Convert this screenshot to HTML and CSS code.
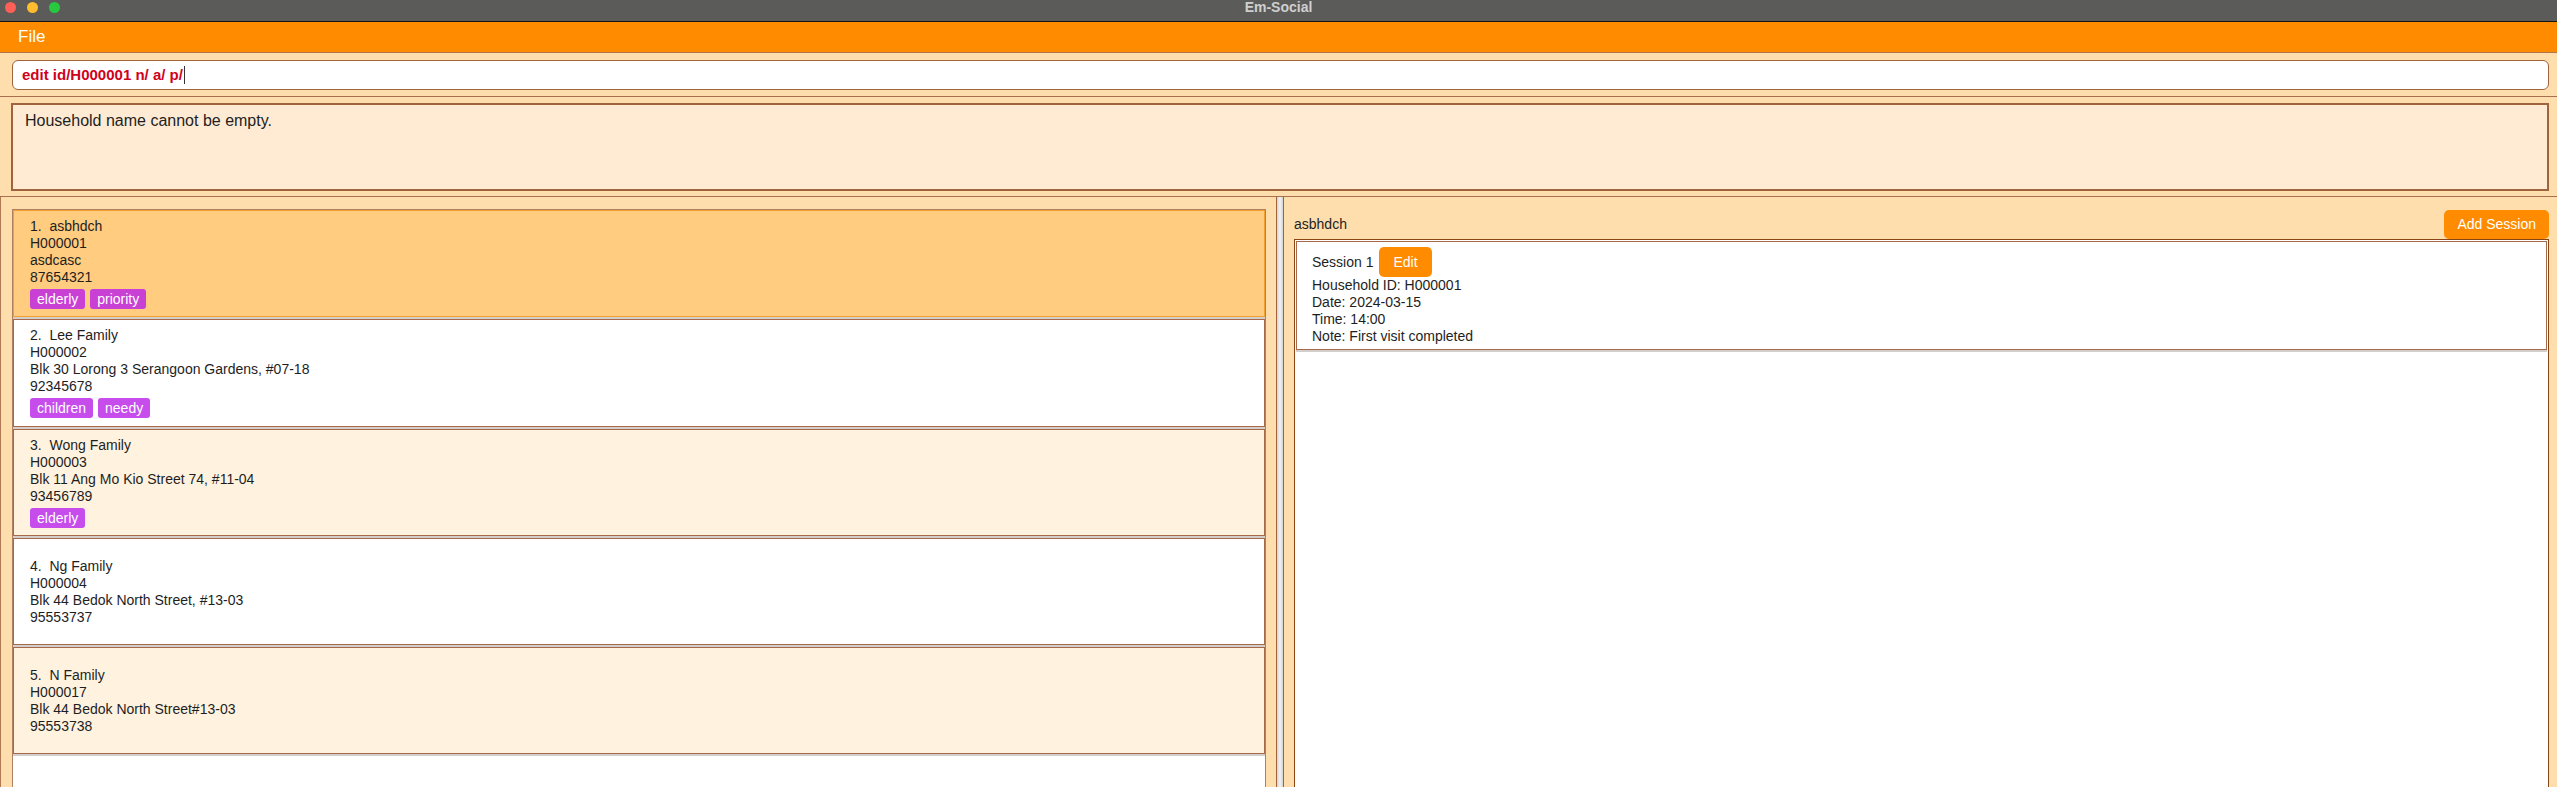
FILE: index.html
```html
<!DOCTYPE html>
<html lang="en">
<head>
<meta charset="utf-8">
<title>Em-Social</title>
<link rel="stylesheet" href="styles.css">
</head>
<body>
<div class="window">
  <div class="titlebar">
    <div class="lights">
      <span class="light red"></span>
      <span class="light yellow"></span>
      <span class="light green"></span>
    </div>
    <div class="title">Em-Social</div>
    <div></div>
  </div>
  <div class="menubar"><span class="menu-item">File</span></div>
  <div class="command">
    <div class="command-input">edit id/H000001 n/ a/ p/<span class="caret"></span></div>
  </div>
  <div class="result">
    <div class="result-box">Household name cannot be empty.</div>
  </div>
  <div class="main">
    <div class="left">
      <div class="list">
        <div class="cell">
          <div class="card selected">
            <div>1.&nbsp;&nbsp;asbhdch</div>
            <div>H000001</div>
            <div>asdcasc</div>
            <div>87654321</div>
            <div class="tags"><span class="tag">elderly</span><span class="tag">priority</span></div>
          </div>
        </div>
        <div class="cell">
          <div class="card">
            <div>2.&nbsp;&nbsp;Lee Family</div>
            <div>H000002</div>
            <div>Blk 30 Lorong 3 Serangoon Gardens, #07-18</div>
            <div>92345678</div>
            <div class="tags"><span class="tag">children</span><span class="tag">needy</span></div>
          </div>
        </div>
        <div class="cell">
          <div class="card alt">
            <div>3.&nbsp;&nbsp;Wong Family</div>
            <div>H000003</div>
            <div>Blk 11 Ang Mo Kio Street 74, #11-04</div>
            <div>93456789</div>
            <div class="tags"><span class="tag">elderly</span></div>
          </div>
        </div>
        <div class="cell">
          <div class="card">
            <div>4.&nbsp;&nbsp;Ng Family</div>
            <div>H000004</div>
            <div>Blk 44 Bedok North Street, #13-03</div>
            <div>95553737</div>
          </div>
        </div>
        <div class="cell">
          <div class="card alt">
            <div>5.&nbsp;&nbsp;N Family</div>
            <div>H000017</div>
            <div>Blk 44 Bedok North Street#13-03</div>
            <div>95553738</div>
          </div>
        </div>
      </div>
    </div>
    <div class="splitter"></div>
    <div class="right">
      <div class="right-head">
        <span class="household-name">asbhdch</span>
        <span class="btn">Add Session</span>
      </div>
      <div class="sessions">
        <div class="session-cell">
          <div class="session">
            <div class="session-top"><span>Session 1</span><span class="btn edit">Edit</span></div>
            <div>Household ID: H000001</div>
            <div>Date: 2024-03-15</div>
            <div>Time: 14:00</div>
            <div>Note: First visit completed</div>
          </div>
        </div>
      </div>
    </div>
  </div>
</div>
</body>
</html>
```

FILE: styles.css
```css
* { box-sizing: border-box; }
html, body {
  margin: 0;
  padding: 0;
  width: 2557px;
  height: 787px;
  overflow: hidden;
  font-family: "Liberation Sans", Arial, sans-serif;
  color: #1e1e1e;
}
.window {
  display: flex;
  flex-direction: column;
  height: 787px;
}
.titlebar {
  height: 22px;
  background: #5b5b59;
  border-bottom: 1px solid #141414;
  display: grid;
  grid-template-columns: 1fr auto 1fr;
  align-items: start;
}
.lights {
  display: flex;
  gap: 11px;
  padding-left: 5px;
  padding-top: 2px;
}
.light {
  width: 11px;
  height: 11px;
  border-radius: 50%;
  display: block;
}
.red { background: #fe5f57; }
.yellow { background: #febc2e; }
.green { background: #28c840; }
.title {
  color: #cfcfcf;
  font-weight: bold;
  font-size: 14px;
  line-height: 14px;
}
.menubar {
  height: 31px;
  background: #ff8c00;
  border-bottom: 1px solid #b3734a;
  padding-left: 18px;
}
.menu-item {
  color: #ffffff;
  font-size: 17px;
  line-height: 30px;
}
.command {
  background: #ffdead;
  padding: 7px 8px 6px 12px;
  border-bottom: 1px solid #a8704c;
}
.command-input {
  height: 30px;
  background: #ffffff;
  border: 1px solid #a0643c;
  border-radius: 6px;
  padding-left: 9px;
  color: #d0021b;
  font-weight: bold;
  font-size: 15px;
  line-height: 28px;
  display: flex;
  align-items: center;
}
.caret {
  display: inline-block;
  width: 1px;
  height: 18px;
  background: #333;
  margin-left: 1px;
}
.result {
  background: #ffdead;
  padding: 6px 8px 5px 11px;
  border-bottom: 1px solid #a8704c;
}
.result-box {
  height: 88px;
  background: #ffebd4;
  border: 2px solid #9e643e;
  padding: 6px 12px;
  font-size: 16px;
  line-height: 20px;
}
.main {
  flex: 1;
  display: flex;
  min-height: 0;
  background: #ffdead;
}
.left {
  width: 1277px;
  border-left: 1px solid #b07a55;
  border-right: 1px solid #a0643c;
  padding: 12px 10px 0 11px;
  display: flex;
  flex-direction: column;
}
.list {
  flex: 1;
  background: #ffffff;
  border: 1px solid #b08060;
  border-bottom: none;
}
.cell {
  border-bottom: 2px solid #d2cfcc;
}
.card {
  height: 107.3px;
  border: 1px solid #a8694b;
  background: #ffffff;
  padding-left: 16px;
  display: flex;
  flex-direction: column;
  justify-content: center;
  font-size: 14px;
  line-height: 17px;
}
.card.selected {
  background: #ffcc80;
  border: 1px solid #f0a030;
}
.card.alt {
  background: #fff3e0;
}
.tags {
  display: flex;
  gap: 5px;
  margin-top: 3px;
}
.tag {
  background: #c64cec;
  color: #ffffff;
  border-radius: 3px;
  height: 20px;
  line-height: 20px;
  padding: 0 7px;
}
.selected .tag {
  background: #c940d4;
}
.splitter {
  width: 6px;
  background: linear-gradient(to right, #d4d4d4, #f2f2f2 50%, #d4d4d4);
}
.right {
  flex: 1;
  border-left: 1px solid #a0643c;
  padding: 12px 8px 0 10px;
  display: flex;
  flex-direction: column;
}
.right-head {
  height: 30px;
  display: flex;
  justify-content: space-between;
  align-items: center;
}
.household-name {
  font-size: 14px;
}
.btn {
  background: #ff8c00;
  color: #ffffff;
  border-radius: 5px;
  font-size: 14px;
  height: 29px;
  line-height: 29px;
  padding: 0 13px;
}
.sessions {
  flex: 1;
  background: #ffffff;
  border: 1px solid #8b4513;
  border-bottom: none;
  padding: 1px 1px 0 1px;
}
.session-cell {
  border-bottom: 2px solid #d2cfcc;
}
.session {
  height: 109px;
  border: 1px solid #a8694b;
  padding: 5px 15px;
  font-size: 14px;
  line-height: 17px;
}
.session-top {
  display: flex;
  align-items: center;
  gap: 6px;
  height: 30px;
}
.btn.edit {
  height: 30px;
  line-height: 30px;
  padding: 0 14px;
}
```
